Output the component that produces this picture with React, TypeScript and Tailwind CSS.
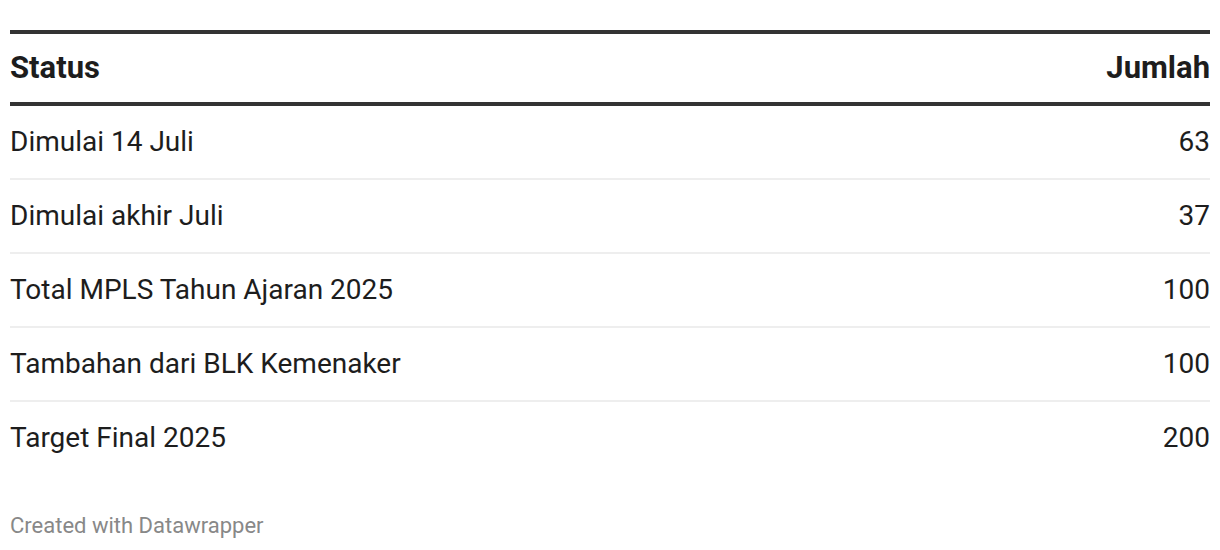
const rows = [
  { status: "Dimulai 14 Juli", jumlah: 63 },
  { status: "Dimulai akhir Juli", jumlah: 37 },
  { status: "Total MPLS Tahun Ajaran 2025", jumlah: 100 },
  { status: "Tambahan dari BLK Kemenaker", jumlah: 100 },
  { status: "Target Final 2025", jumlah: 200 },
];

export default function App() {
  return (
    <div
      className="min-h-[550px] bg-white px-[10px] pt-[30px] text-[#1d1d1d]"
      style={{ fontFamily: "Roboto, 'Liberation Sans', sans-serif" }}
    >
      <div className="border-t-4 border-[#333333]">
        <div className="flex h-[72px] items-center justify-between border-b-4 border-[#333333] text-[31px] font-bold leading-[1.2]">
          <span>Status</span>
          <span>Jumlah</span>
        </div>
        {rows.map((row, i) => (
          <div
            key={row.status}
            className={
              "flex items-center justify-between text-[28px] leading-[1.2] " +
              (i < rows.length - 1 ? "h-[74px] border-b-2 border-[#eeeeee]" : "h-[72px]")
            }
          >
            <span>{row.status}</span>
            <span>{row.jumlah}</span>
          </div>
        ))}
      </div>
      <div className="mt-[39px] text-[22px] leading-[26px] text-[#888888]">Created with Datawrapper</div>
    </div>
  );
}
